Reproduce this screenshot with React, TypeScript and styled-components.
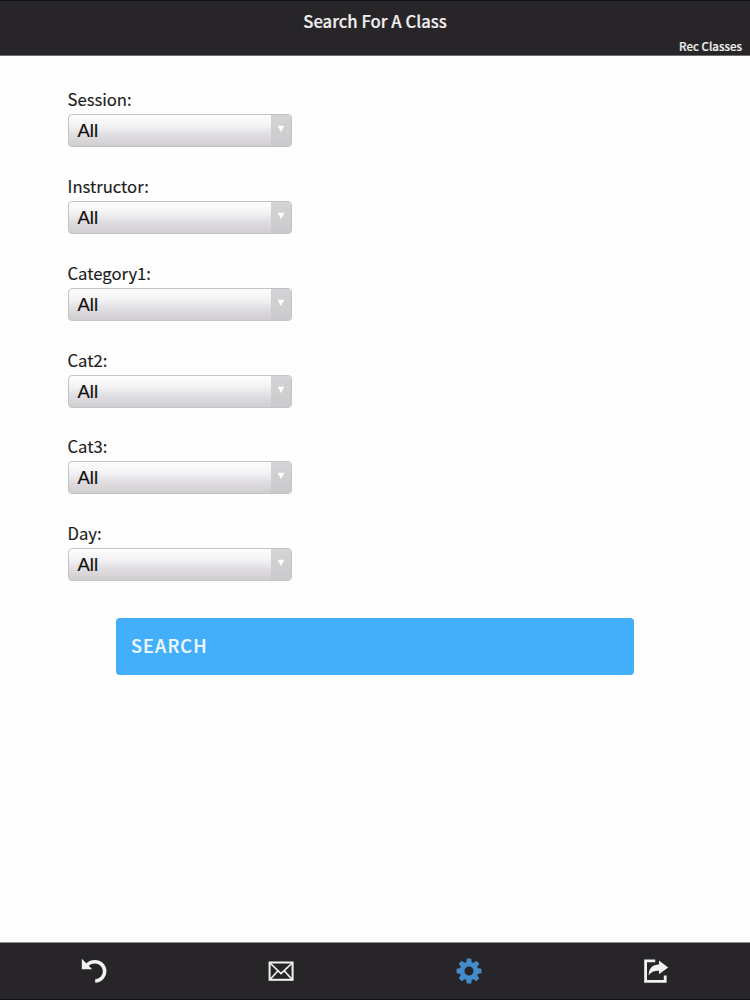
import React from 'react';
import styled, { createGlobalStyle } from 'styled-components';

const GlobalStyle = createGlobalStyle`
  * { box-sizing: border-box; }
  body { margin: 0; background: #fefefe; font-family: "Noto Sans CJK SC", "Noto Sans", sans-serif; }
`;

const Screen = styled.div`
  display: flex;
  flex-direction: column;
  width: 750px;
  height: 1000px;
  overflow: hidden;
`;

const Header = styled.header`
  height: 56px;
  flex: none;
  display: flex;
  flex-direction: column;
  background: #272528;
  border-top: 1px solid #111012;
  border-bottom: 1px solid #6e6d6f;
  color: #f0eff0;
`;

const Title = styled.h1`
  margin: 9px 0 0;
  font-size: 16.65px;
  line-height: 22px;
  font-weight: 500;
  text-align: center;
  -webkit-text-stroke: 0.2px currentColor;
`;

const Subtitle = styled.div`
  margin-top: 6px;
  padding-right: 8px;
  font-size: 11.5px;
  line-height: 16px;
  font-weight: 500;
  text-align: right;
  -webkit-text-stroke: 0.2px currentColor;
`;

const Form = styled.form`
  flex: 1;
  display: flex;
  flex-direction: column;
  padding: 31.3px 0 0 67.5px;
`;

const Field = styled.div`
  flex: none;
  height: 86.8px;
  display: flex;
  flex-direction: column;
`;

const Label = styled.label`
  font-size: 16.65px;
  line-height: 24px;
  height: 27px;
  color: #1c1c1c;
  -webkit-text-stroke: 0.15px currentColor;
`;

const Select = styled.div`
  display: flex;
  width: 224px;
  height: 33px;
  border: 1px solid #c3c2c4;
  border-radius: 4px;
  overflow: hidden;
  background: linear-gradient(#fdfdfd 0%, #f3f2f4 35%, #dfdde0 65%, #d0ced1 100%);
`;

const Value = styled.span`
  flex: 1;
  padding-left: 9px;
  font: 18.5px/32px "Liberation Sans", sans-serif;
  color: #111;
  -webkit-text-stroke: 0.2px currentColor;
`;

const ArrowBox = styled.span`
  width: 20px;
  display: flex;
  justify-content: center;
  padding-top: 10px;
  background: linear-gradient(#d4d3d5, #cac9cb);
`;

const SearchButton = styled.button`
  flex: none;
  width: 518px;
  height: 57px;
  margin: 9.7px 0 0 48.5px;
  padding: 0 15px 3px;
  border: 0;
  border-radius: 4px;
  background: #43aef9;
  color: #effaff;
  font: 500 18px/28px "Noto Sans CJK SC", sans-serif;
  letter-spacing: 1.15px;
  text-align: left;
  -webkit-text-stroke: 0.2px currentColor;
`;

const TabBar = styled.nav`
  flex: none;
  height: 58px;
  display: grid;
  grid-template-columns: repeat(4, 1fr);
  background: #272528;
  border-top: 1px solid #8e8d8f;
  border-bottom: 1px solid #111012;
`;

const Tab = styled.a<{ $active?: boolean }>`
  display: flex;
  align-items: center;
  justify-content: center;
  color: ${p => (p.$active ? '#438bca' : '#f3f2f3')};
`;

const fields = ['Session:', 'Instructor:', 'Category1:', 'Cat2:', 'Cat3:', 'Day:'];
const teeth = [0, 45, 90, 135, 180, 225, 270, 315];

const UndoIcon = () => (
  <svg width="28" height="28" viewBox="0 0 28 28" fill="none">
    <path d="M6.5 8.5C8.8 6 11.6 4.7 14.8 4.7A9.6 9.6 0 0 1 15.2 24" stroke="currentColor" strokeWidth="3.5" />
    <path d="M1.8 1.8V12.2H12.2Z" fill="currentColor" />
  </svg>
);

const MailIcon = () => (
  <svg width="28" height="28" viewBox="0 0 28 28" fill="none" stroke="currentColor">
    <rect x="2.6" y="5.5" width="23" height="17.3" strokeWidth="2" />
    <path d="M3.5 6.5L14 16.5L24.7 6.5M3.5 22L11 13.8M24.7 22L17.2 13.8" strokeWidth="1.7" />
  </svg>
);

const GearIcon = () => (
  <svg width="28" height="28" viewBox="0 0 28 28">
    <circle cx="14" cy="14" r="6.9" fill="none" stroke="currentColor" strokeWidth="4.8" />
    {teeth.map(a => (
      <path key={a} d="M11.1 6L11.8 1.6H16.2L16.9 6Z" fill="currentColor" transform={`rotate(${a} 14 14)`} />
    ))}
  </svg>
);

const ShareIcon = () => (
  <svg width="28" height="28" viewBox="0 0 28 28">
    <path d="M13.2 3.9H3.6V24.3H23.2V18.5" fill="none" stroke="currentColor" strokeWidth="2.8" />
    <path d="M6.6 18.2C7 11.4 10.4 7.7 17 7.6V3.6L26.2 10.4L17 17.2V13.8C12.5 13.6 9.2 14.8 6.6 18.2Z" fill="currentColor" />
  </svg>
);

export default function App() {
  return (
    <Screen>
      <GlobalStyle />
      <Header>
        <Title>Search For A Class</Title>
        <Subtitle>Rec Classes</Subtitle>
      </Header>
      <Form>
        {fields.map(name => (
          <Field key={name}>
            <Label>{name}</Label>
            <Select>
              <Value>All</Value>
              <ArrowBox>
                <svg width="8" height="8" viewBox="0 0 8 8"><path d="M0.7 0.7H7.3L4 7.3Z" fill="#fff" /></svg>
              </ArrowBox>
            </Select>
          </Field>
        ))}
        <SearchButton type="button">SEARCH</SearchButton>
      </Form>
      <TabBar>
        <Tab><UndoIcon /></Tab>
        <Tab><MailIcon /></Tab>
        <Tab $active><GearIcon /></Tab>
        <Tab><ShareIcon /></Tab>
      </TabBar>
    </Screen>
  );
}
